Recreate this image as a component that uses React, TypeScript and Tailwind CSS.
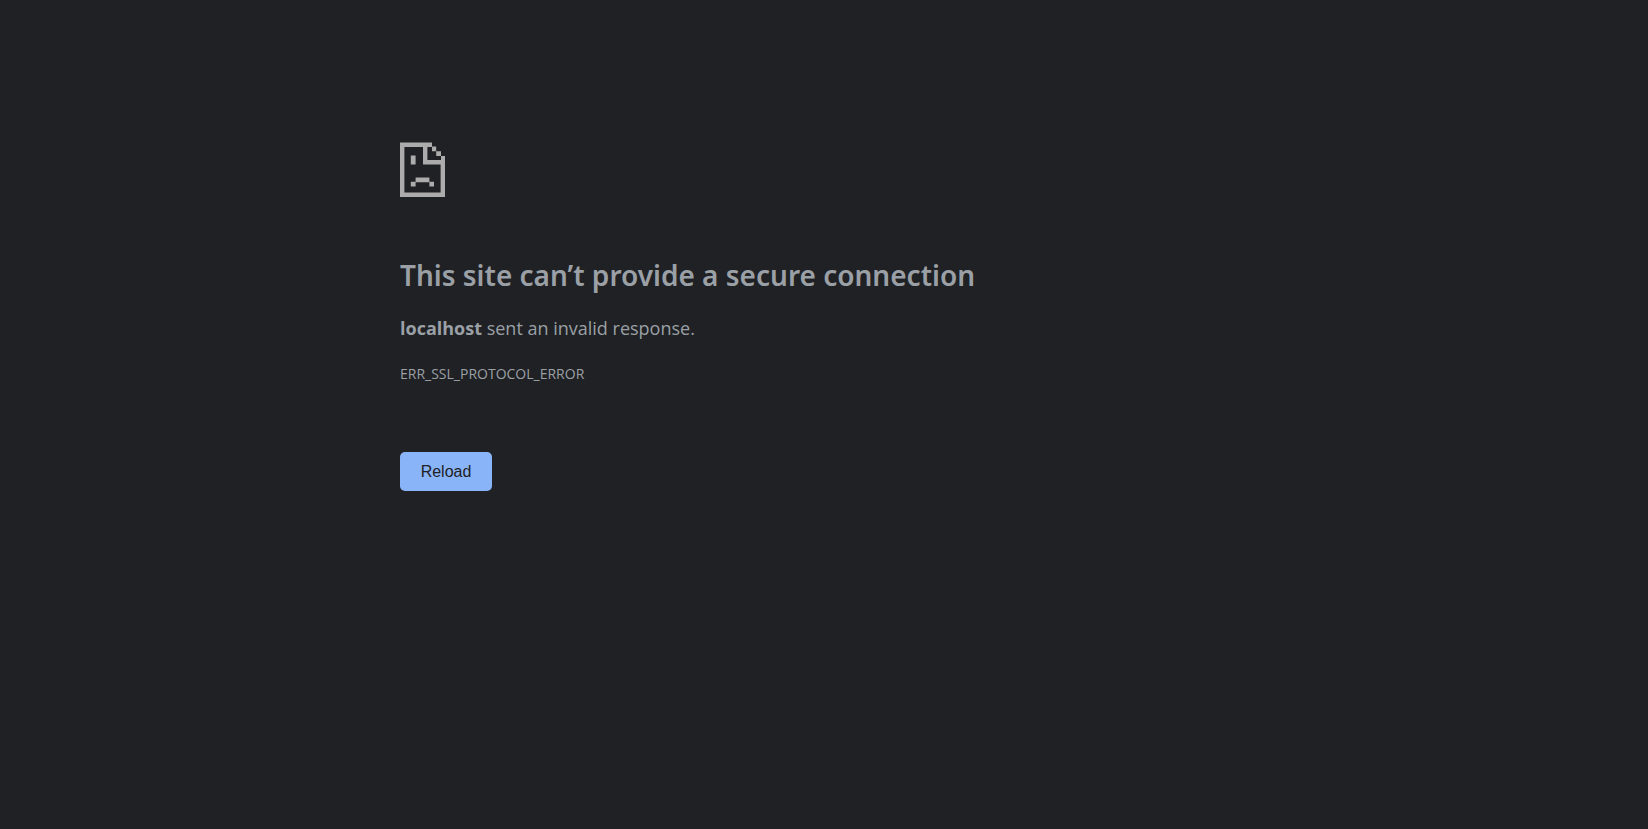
import React from 'react';

function SadPageIcon() {
  return (
    <svg
      className="block h-[55px] w-[45px] fill-[#acacac]"
      viewBox="0 0 45 55"
      aria-hidden="true"
    >
      <path
        d="M0 .5h32v4.5H27.4v13H41v-4h4v41H0zM4.4 5v45.4h36.2V22.4H23V5z"
        fillRule="evenodd"
      />
      <path d="M32 4.6h4.2v4.6H32zM36.2 9.2H41v4.8h-4.8zM10.8 13.6h4.8v8.8h-4.8zM15.6 35.6h13.8v4.6H15.6zM10.8 39.8h4.8v4.6h-4.8zM29.4 39.8h4.6v4.6h-4.6z" />
    </svg>
  );
}

export default function App() {
  return (
    <div className="min-h-screen bg-[#202124] px-6 pt-[142px] font-['Open_Sans',sans-serif] text-[#9aa0a6]">
      <main className="mx-auto max-w-[848px]">
        <SadPageIcon />
        <h1 className="mt-14 font-['Noto_Sans',sans-serif] text-[28px] leading-[44px] font-semibold">
          This site can’t provide a secure connection
        </h1>
        <p className="mt-4 text-lg leading-[30px]">
          <strong className="font-bold">localhost</strong> sent an invalid response.
        </p>
        <p className="mt-4 text-sm leading-[30px]">ERR_SSL_PROTOCOL_ERROR</p>
        <button
          type="button"
          className="mt-[63px] min-w-[92px] rounded-[5px] bg-[#8ab4f8] px-5 py-2 font-['Liberation_Sans',sans-serif] text-base leading-[23px] text-[#202124]"
        >
          Reload
        </button>
      </main>
    </div>
  );
}
